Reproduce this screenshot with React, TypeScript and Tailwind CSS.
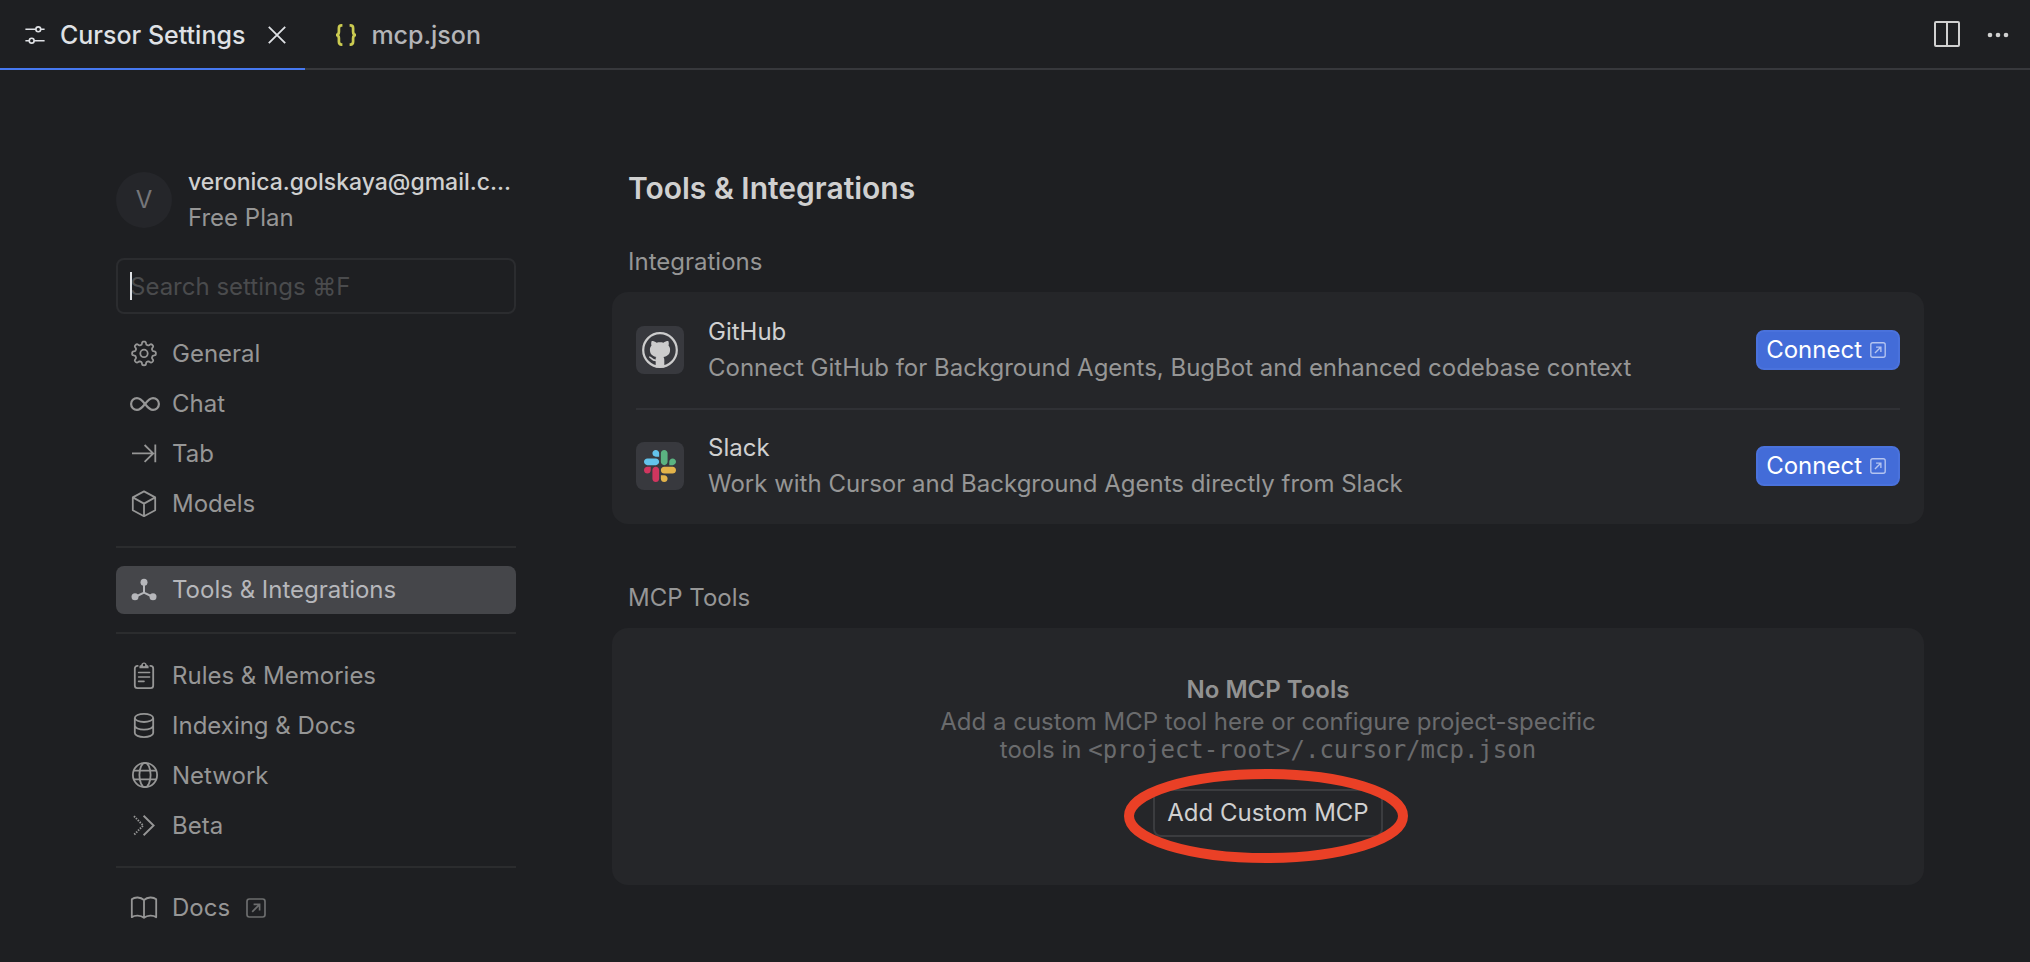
import type { ReactNode } from "react";

type IconProps = { children: ReactNode };

function NavIcon({ children }: IconProps) {
  return (
    <svg
      viewBox="0 0 28 28"
      fill="none"
      stroke="currentColor"
      strokeWidth="1.8"
      strokeLinejoin="round"
      className="size-7 shrink-0 overflow-visible"
      aria-hidden="true"
    >
      {children}
    </svg>
  );
}

/* Outline of an eight-toothed gear centred on (14, 13.4). */
const gearPath =
  Array.from({ length: 192 }, (_, i) => {
    const a = (i / 192) * Math.PI * 2;
    const r = 10.4 + 1.5 * Math.tanh(2.2 * Math.cos(8 * a));
    return `${i === 0 ? "M" : "L"}${(14 + r * Math.sin(a)).toFixed(2)} ${(13.4 - r * Math.cos(a)).toFixed(2)}`;
  }).join("") + "Z";

const GearIcon = () => (
  <NavIcon>
    <path d={gearPath} />
    <circle cx="14" cy="13.4" r="3.7" />
  </NavIcon>
);

const InfinityIcon = () => (
  <NavIcon>
    <path
      strokeWidth="2.2"
      d="M15 14C12 10.2 10 8.1 7 8.1a5.9 5.9 0 0 0 0 11.8C10 19.9 12 17.8 15 14C18 10.2 20 8.1 23 8.1a5.9 5.9 0 0 1 0 11.8C20 19.9 18 17.8 15 14Z"
    />
  </NavIcon>
);

const TabIcon = () => (
  <NavIcon>
    <path d="M2 13.4H23.2M14.6 5L23.2 13.4L14.6 21.8M25.3 4.6V22.2" strokeLinejoin="miter" />
  </NavIcon>
);

const BoxIcon = () => (
  <NavIcon>
    <path d="M14 1.4L25.2 7.4V20.2L14 26.2L2.8 20.2V7.4ZM2.8 7.4L14 13.6L25.2 7.4M14 13.6V26.2" />
  </NavIcon>
);

const ToolsIcon = () => (
  <NavIcon>
    <path d="M14 7V16.6M14 16.6L5 21M14 16.6L23 21" strokeWidth="2" />
    <g fill="currentColor" stroke="none">
      <circle cx="14" cy="6.2" r="3.5" />
      <circle cx="5" cy="20.8" r="3.5" />
      <circle cx="23" cy="20.8" r="3.5" />
    </g>
  </NavIcon>
);

const ClipboardIcon = () => (
  <NavIcon>
    <path d="M8.4 3.8H7.4A2.6 2.6 0 0 0 4.8 6.4V23.6A2.6 2.6 0 0 0 7.4 26.2H20.6A2.6 2.6 0 0 0 23.2 23.6V6.4A2.6 2.6 0 0 0 20.6 3.8H19.6" />
    <path d="M8.6 10.5H19.6M8.6 15H19.6M8.6 19.4H14" strokeLinecap="round" strokeWidth="1.6" />
    <path
      fill="currentColor"
      stroke="none"
      fillRule="evenodd"
      d="M9.4 6.2V4.6C9.4 3.6 10.2 3 11.2 2.9C11.4 1.4 12.5 .4 14 .4S16.6 1.4 16.8 2.9C17.8 3 18.6 3.6 18.6 4.6V6.2ZM14 1.8A1.2 1.2 0 1 0 14 4.2A1.2 1.2 0 1 0 14 1.8Z"
    />
  </NavIcon>
);

const DatabaseIcon = () => (
  <NavIcon>
    <ellipse cx="14" cy="5.9" rx="9.2" ry="4.1" />
    <path d="M4.8 6V21C4.8 23.3 8.9 25.1 14 25.1S23.2 23.3 23.2 21V6M4.8 13.6C4.8 15.9 8.9 17.7 14 17.7S23.2 15.9 23.2 13.6" />
  </NavIcon>
);

const GlobeIcon = () => (
  <NavIcon>
    <circle cx="15" cy="13" r="12.1" />
    <ellipse cx="15" cy="13" rx="5.6" ry="12.1" />
    <path d="M3.6 8.6H26.4M3.6 17.4H26.4" />
  </NavIcon>
);

const BetaIcon = () => (
  <NavIcon>
    <path d="M13.6 3.8L23.6 13.5L13.6 23.2" strokeWidth="1.9" strokeLinejoin="miter" />
    <path d="M4 4.2L13.2 13.5L4 22.8" strokeWidth="1.9" strokeDasharray="1.5 1.2" />
  </NavIcon>
);

const BookIcon = () => (
  <NavIcon>
    <path d="M14 6C10.5 2.8 4.8 2.8 1.8 5.2V23.2C4.8 21 10.5 21 14 23.8C17.5 21 23.2 21 26.2 23.2V5.2C23.2 2.8 17.5 2.8 14 6ZM14 6V23.6" />
  </NavIcon>
);

function ExternalIcon({ className }: { className: string }) {
  return (
    <svg viewBox="0 0 20 20" fill="none" stroke="currentColor" strokeWidth="1.7" className={className} aria-hidden="true">
      <rect x="1" y="1" width="18" height="18" rx="2.4" />
      <path d="M6.2 13.8L13.4 6.6M7.6 6.4H13.6V12.4" />
    </svg>
  );
}

function SlidersIcon() {
  return (
    <svg viewBox="0 0 20 18" fill="none" stroke="currentColor" strokeWidth="1.6" className="h-[18px] w-5" aria-hidden="true">
      <path d="M.4 3.3H10.9M15.7 3.3H19.6M.4 14.7H4.3M9.1 14.7H19.6" />
      <circle cx="13.3" cy="3.3" r="2.4" />
      <circle cx="6.7" cy="14.7" r="2.4" />
    </svg>
  );
}

function CloseIcon() {
  return (
    <svg viewBox="0 0 18 18" stroke="currentColor" strokeWidth="1.8" className="size-[18px]" aria-hidden="true">
      <path d="M.8 .8L17.2 17.2M17.2 .8L.8 17.2" />
    </svg>
  );
}

function BracesIcon() {
  return (
    <svg viewBox="0 0 22 22" fill="none" stroke="currentColor" strokeWidth="2.7" className="size-[22px] text-[#cbcb51]" aria-hidden="true">
      <path d="M7.4 1.4H6.6C4.6 1.4 3.9 2.3 3.9 4.2V7.8C3.9 9.8 3.2 11 1 11C3.2 11 3.9 12.2 3.9 14.2V17.8C3.9 19.7 4.6 20.6 6.6 20.6H7.4" />
      <path d="M14.6 1.4H15.4C17.4 1.4 18.1 2.3 18.1 4.2V7.8C18.1 9.8 18.8 11 21 11C18.8 11 18.1 12.2 18.1 14.2V17.8C18.1 19.7 17.4 20.6 15.4 20.6H14.6" />
    </svg>
  );
}

function GithubIcon() {
  return (
    <svg viewBox="0 0 36 36" className="size-9 text-[#cccccc]" aria-hidden="true">
      <circle cx="18" cy="18" r="16.8" fill="none" stroke="currentColor" strokeWidth="2.2" />
      <path
        fill="currentColor"
        d="M9.7 9C11.5 9 13.2 9.7 14.6 10.7C16.9 10.2 19.1 10.2 21.4 10.7C22.8 9.7 24.5 9 26.3 9C27 10.8 26.9 12.4 26.5 13.5C27.6 14.7 28.1 16 28.1 17.8C28.1 22.4 25.4 24.4 21.4 25C22 25.7 22.3 26.6 22.3 28V35.4H13.7V25.4L14.6 25C10.6 24.4 7.9 22.4 7.9 17.8C7.9 16 8.4 14.7 9.5 13.5C9.1 12.4 9 10.8 9.7 9Z"
      />
      <path d="M7.2 25C9.6 25.2 9.6 28.6 14 28.4" fill="none" stroke="currentColor" strokeWidth="1.6" />
    </svg>
  );
}

function SlackIcon() {
  return (
    <svg viewBox="0 0 122.8 122.8" className="size-8" aria-hidden="true">
      <path
        fill="#d0365f"
        d="M25.8 77.6c0 7.1-5.8 12.9-12.9 12.9S0 84.7 0 77.6s5.8-12.9 12.9-12.9h12.9v12.9zm6.5 0c0-7.1 5.8-12.9 12.9-12.9s12.9 5.8 12.9 12.9v32.3c0 7.1-5.8 12.9-12.9 12.9s-12.9-5.8-12.9-12.9V77.6z"
      />
      <path
        fill="#63c3ec"
        d="M45.2 25.8c-7.1 0-12.9-5.8-12.9-12.9S38.1 0 45.2 0s12.9 5.8 12.9 12.9v12.9H45.2zm0 6.5c7.1 0 12.9 5.8 12.9 12.9s-5.8 12.9-12.9 12.9H12.9C5.8 58.1 0 52.3 0 45.2s5.8-12.9 12.9-12.9h32.3z"
      />
      <path
        fill="#5bb381"
        d="M97 45.2c0-7.1 5.8-12.9 12.9-12.9s12.9 5.8 12.9 12.9-5.8 12.9-12.9 12.9H97V45.2zm-6.5 0c0 7.1-5.8 12.9-12.9 12.9s-12.9-5.8-12.9-12.9V12.9C64.7 5.8 70.5 0 77.6 0s12.9 5.8 12.9 12.9v32.3z"
      />
      <path
        fill="#e3b34a"
        d="M77.6 97c7.1 0 12.9 5.8 12.9 12.9s-5.8 12.9-12.9 12.9-12.9-5.8-12.9-12.9V97h12.9zm0-6.5c-7.1 0-12.9-5.8-12.9-12.9s5.8-12.9 12.9-12.9h32.3c7.1 0 12.9 5.8 12.9 12.9s-5.8 12.9-12.9 12.9H77.6z"
      />
    </svg>
  );
}

function NavItem({ icon, label, active = false, external = false }: { icon: ReactNode; label: string; active?: boolean; external?: boolean }) {
  return (
    <a
      href="#"
      aria-current={active ? "page" : undefined}
      className={
        active
          ? "flex h-12 items-center gap-[14px] rounded-lg bg-[#45464a] px-[14px] text-[#b6b7bb]"
          : "flex h-12 items-center gap-[14px] rounded-lg px-[14px] text-[#969696]"
      }
    >
      {icon}
      <span>{label}</span>
      {external && <ExternalIcon className="ml-0.5 size-5 text-[#6c6d6e]" />}
    </a>
  );
}

function IntegrationRow({ icon, name, description, className }: { icon: ReactNode; name: string; description: string; className: string }) {
  return (
    <li className={className}>
      <span className="flex size-12 shrink-0 items-center justify-center rounded-lg bg-[#38393e]">{icon}</span>
      <div className="min-w-0 flex-1">
        <h3 className="text-[#d0d0d0]">{name}</h3>
        <p className="text-[#969696]">{description}</p>
      </div>
      <button
        type="button"
        className="flex h-10 shrink-0 items-center gap-2 rounded-lg border-2 border-[#4a72dc] bg-[#436cd8] pr-3 pl-2 text-white"
      >
        Connect
        <ExternalIcon className="size-4 text-[#b4c4f0]" />
      </button>
    </li>
  );
}

export default function App() {
  return (
    <div className="flex min-h-screen flex-col bg-[#1e1f22] font-['Inter',sans-serif] text-[24px] leading-9 text-[#d0d0d0]">
      <header className="flex h-[70px] items-center justify-between text-[25px] shadow-[inset_0_-2px_0_#37383c]">
        <div role="tablist" className="flex h-full font-medium">
          <div className="flex h-full items-center pr-[19px] pl-[25px] text-[#dfe1e5] shadow-[inset_0_-2px_0_#4678f0]">
            <button type="button" role="tab" aria-selected="true" className="flex items-center gap-[15px]">
              <SlidersIcon />
              Cursor Settings
            </button>
            <button type="button" aria-label="Close" className="ml-[23px]">
              <CloseIcon />
            </button>
          </div>
          <button type="button" role="tab" aria-selected="false" className="flex h-full items-center gap-[14px] px-[30px] text-[#b4b5b8]">
            <BracesIcon />
            mcp.json
          </button>
        </div>
        <div className="flex items-center gap-[26px] pr-[21px]">
          <button type="button" aria-label="Split editor">
            <svg viewBox="0 0 28 28" fill="none" stroke="currentColor" strokeWidth="2" className="size-7" aria-hidden="true">
              <rect x="2" y="1" width="24" height="24" rx="1" />
              <path d="M14 1V25" />
            </svg>
          </button>
          <button type="button" aria-label="More actions">
            <svg viewBox="0 0 22 8" fill="currentColor" className="h-2 w-[22px]" aria-hidden="true">
              <circle cx="3" cy="4" r="2.3" />
              <circle cx="11" cy="4" r="2.3" />
              <circle cx="19" cy="4" r="2.3" />
            </svg>
          </button>
        </div>
      </header>

      <div className="flex flex-1 gap-24 pr-[106px] pl-[116px]">
        <aside className="w-[400px] shrink-0 pt-[94px] pb-[30px]">
          <div className="flex items-center gap-4">
            <span className="flex size-14 shrink-0 items-center justify-center rounded-full bg-[#25262a] text-[#75767a]">V</span>
            <div className="min-w-0">
              <p className="text-[23px] font-medium whitespace-nowrap">veronica.golskaya@gmail.c...</p>
              <p className="text-[#969696]">Free Plan</p>
            </div>
          </div>

          <div className="relative mt-[22px]">
            <input
              type="search"
              aria-label="Search settings"
              placeholder="Search settings ⌘F"
              className="block h-14 w-full rounded-lg border-2 border-[#2b2c2f] bg-transparent px-3 caret-transparent outline-none placeholder:text-[#4a4b4d]"
            />
            <span className="absolute top-[14px] left-[14px] h-7 w-0.5 bg-[#dfe1e5]" />
          </div>

          <nav aria-label="Settings" className="mt-4">
            <div className="flex flex-col gap-0.5">
              <NavItem icon={<GearIcon />} label="General" />
              <NavItem icon={<InfinityIcon />} label="Chat" />
              <NavItem icon={<TabIcon />} label="Tab" />
              <NavItem icon={<BoxIcon />} label="Models" />
            </div>
            <hr className="my-[18px] border-t-2 border-[#2b2c2e]" />
            <NavItem icon={<ToolsIcon />} label="Tools & Integrations" active />
            <hr className="my-[18px] border-t-2 border-[#2b2c2e]" />
            <div className="flex flex-col gap-0.5">
              <NavItem icon={<ClipboardIcon />} label="Rules & Memories" />
              <NavItem icon={<DatabaseIcon />} label="Indexing & Docs" />
              <NavItem icon={<GlobeIcon />} label="Network" />
              <NavItem icon={<BetaIcon />} label="Beta" />
            </div>
            <hr className="my-4 border-t-2 border-[#2b2c2e]" />
            <NavItem icon={<BookIcon />} label="Docs" external />
          </nav>
        </aside>

        <main className="min-w-0 flex-1 pt-[100px]">
          <h1 className="pl-4 text-[30px] font-semibold">Tools &amp; Integrations</h1>

          <section className="mt-[38px]">
            <h2 className="pl-4 text-[#969696]">Integrations</h2>
            <ul className="mt-3 rounded-2xl bg-[#252629] px-6">
              <IntegrationRow
                icon={<GithubIcon />}
                name="GitHub"
                description="Connect GitHub for Background Agents, BugBot and enhanced codebase context"
                className="flex items-center gap-6 border-b-2 border-[#303135] py-[22px]"
              />
              <IntegrationRow
                icon={<SlackIcon />}
                name="Slack"
                description="Work with Cursor and Background Agents directly from Slack"
                className="flex items-center gap-6 pt-5 pb-[22px]"
              />
            </ul>
          </section>

          <section className="mt-14">
            <h2 className="pl-4 text-[#969696]">MCP Tools</h2>
            <div className="mt-3 flex flex-col items-center rounded-2xl bg-[#252629] px-6 pt-11 pb-12 text-center">
              <h3 className="font-semibold text-[#929292]">No MCP Tools</h3>
              <p className="leading-7 text-[#6a6b6d]">
                Add a custom MCP tool here or configure project-specific
                <br />
                tools in <code className="font-['DejaVu_Sans_Mono',monospace]">&lt;project-root&gt;/.cursor/mcp.json</code>
              </p>
              <div className="relative mt-[25px]">
                <button type="button" className="h-12 rounded-lg border-2 border-[#3b3c3f] px-3">
                  Add Custom MCP
                </button>
                <svg
                  viewBox="0 0 288 94"
                  className="pointer-events-none absolute -top-5 left-1/2 h-[94px] w-[288px] max-w-none -translate-x-1/2"
                  fill="none"
                  stroke="#ea4026"
                  strokeWidth="10"
                  aria-hidden="true"
                >
                  <ellipse cx="142" cy="47" rx="137" ry="42" />
                </svg>
              </div>
            </div>
          </section>
        </main>
      </div>
    </div>
  );
}
